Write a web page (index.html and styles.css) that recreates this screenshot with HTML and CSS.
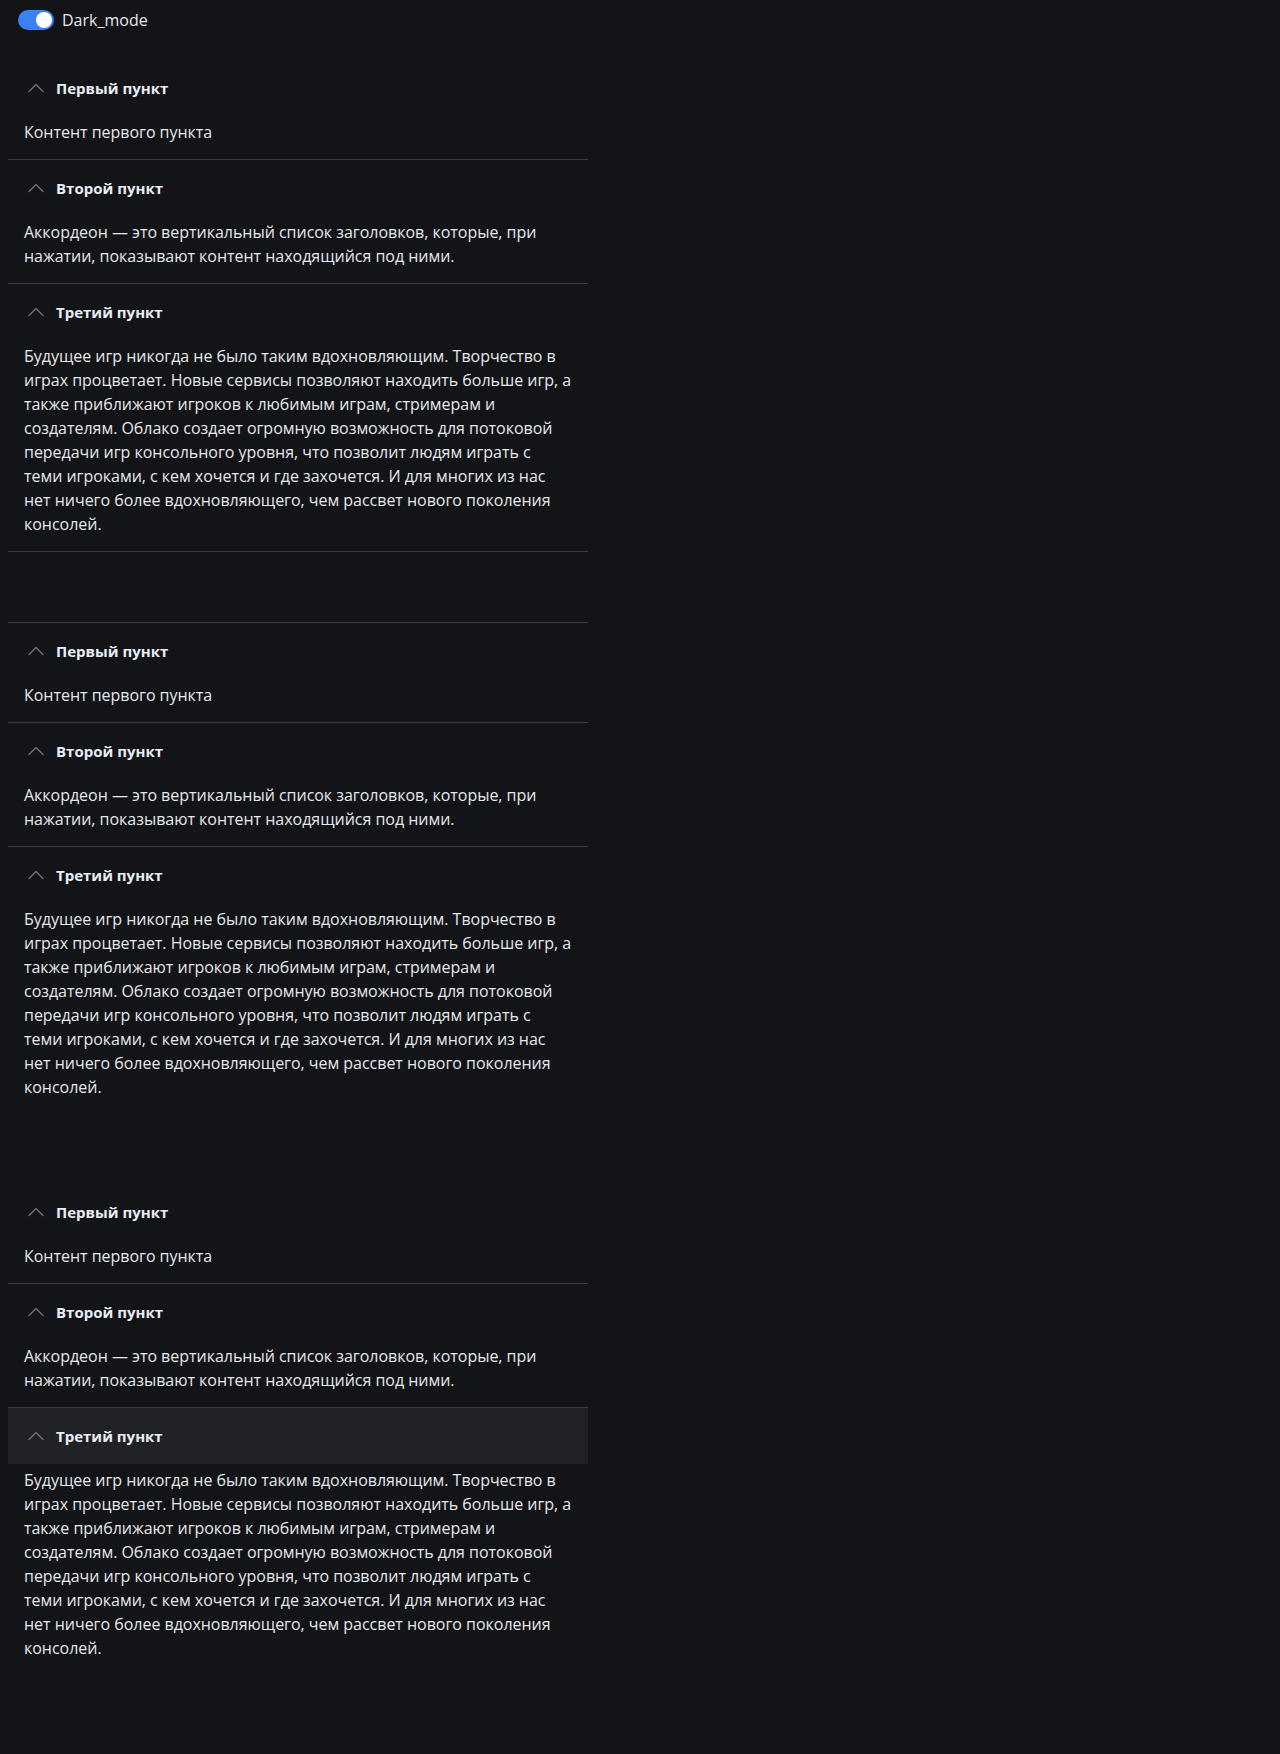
FILE: index.html
```html
<!DOCTYPE html>
<html lang="ru">
<head>
<meta charset="utf-8">
<title>Accordion</title>
<link rel="stylesheet" href="styles.css">
</head>
<body>
<label class="switch-row">
  <span class="switch"><span class="knob"></span></span>
  <span class="switch-label">Dark_mode</span>
</label>

<div class="acc acc--bottom">
  <div class="item">
    <div class="head"><svg class="chev" viewBox="0 0 24 24"><path d="M5 15.5l7-7 7 7"/></svg><span>Первый пункт</span></div>
    <div class="body">Контент первого пункта</div>
  </div>
  <div class="item">
    <div class="head"><svg class="chev" viewBox="0 0 24 24"><path d="M5 15.5l7-7 7 7"/></svg><span>Второй пункт</span></div>
    <div class="body">Аккордеон — это вертикальный список заголовков, которые, при нажатии, показывают контент находящийся под ними.</div>
  </div>
  <div class="item">
    <div class="head"><svg class="chev" viewBox="0 0 24 24"><path d="M5 15.5l7-7 7 7"/></svg><span>Третий пункт</span></div>
    <div class="body">Будущее игр никогда не было таким вдохновляющим. Творчество в играх процветает. Новые сервисы позволяют находить больше игр, а также приближают игроков к любимым играм, стримерам и создателям. Облако создает огромную возможность для потоковой передачи игр консольного уровня, что позволит людям играть с теми игроками, с кем хочется и где захочется. И для многих из нас нет ничего более вдохновляющего, чем рассвет нового поколения консолей.</div>
  </div>
</div>

<div class="acc acc--top">
  <div class="item">
    <div class="head"><svg class="chev" viewBox="0 0 24 24"><path d="M5 15.5l7-7 7 7"/></svg><span>Первый пункт</span></div>
    <div class="body">Контент первого пункта</div>
  </div>
  <div class="item">
    <div class="head"><svg class="chev" viewBox="0 0 24 24"><path d="M5 15.5l7-7 7 7"/></svg><span>Второй пункт</span></div>
    <div class="body">Аккордеон — это вертикальный список заголовков, которые, при нажатии, показывают контент находящийся под ними.</div>
  </div>
  <div class="item">
    <div class="head"><svg class="chev" viewBox="0 0 24 24"><path d="M5 15.5l7-7 7 7"/></svg><span>Третий пункт</span></div>
    <div class="body">Будущее игр никогда не было таким вдохновляющим. Творчество в играх процветает. Новые сервисы позволяют находить больше игр, а также приближают игроков к любимым играм, стримерам и создателям. Облако создает огромную возможность для потоковой передачи игр консольного уровня, что позволит людям играть с теми игроками, с кем хочется и где захочется. И для многих из нас нет ничего более вдохновляющего, чем рассвет нового поколения консолей.</div>
  </div>
</div>

<div class="acc acc--flush">
  <div class="item">
    <div class="head"><svg class="chev" viewBox="0 0 24 24"><path d="M5 15.5l7-7 7 7"/></svg><span>Первый пункт</span></div>
    <div class="body">Контент первого пункта</div>
  </div>
  <div class="item">
    <div class="head"><svg class="chev" viewBox="0 0 24 24"><path d="M5 15.5l7-7 7 7"/></svg><span>Второй пункт</span></div>
    <div class="body">Аккордеон — это вертикальный список заголовков, которые, при нажатии, показывают контент находящийся под ними.</div>
  </div>
  <div class="item">
    <div class="head head--hover"><svg class="chev" viewBox="0 0 24 24"><path d="M5 15.5l7-7 7 7"/></svg><span>Третий пункт</span></div>
    <div class="body">Будущее игр никогда не было таким вдохновляющим. Творчество в играх процветает. Новые сервисы позволяют находить больше игр, а также приближают игроков к любимым играм, стримерам и создателям. Облако создает огромную возможность для потоковой передачи игр консольного уровня, что позволит людям играть с теми игроками, с кем хочется и где захочется. И для многих из нас нет ничего более вдохновляющего, чем рассвет нового поколения консолей.</div>
  </div>
</div>
</body>
</html>
```

FILE: styles.css
```css
html {
  background: #131418;
}
body {
  margin: 8px;
  min-height: 1738px;
  font-family: "Open Sans", "Noto Sans", sans-serif;
  font-size: 16px;
  line-height: 24px;
  color: #e6e7ea;
}
.switch-row {
  display: flex;
  align-items: center;
  gap: 8px;
  height: 24px;
  padding-left: 10px;
}
.switch {
  display: flex;
  justify-content: flex-end;
  align-items: center;
  width: 36px;
  height: 20px;
  padding: 2px;
  box-sizing: border-box;
  border-radius: 10px;
  background: #3b82f6;
}
.knob {
  width: 16px;
  height: 16px;
  border-radius: 50%;
  background: #ffffff;
}
.switch-label {
  font-size: 16px;
  color: #e6e7ea;
}
.acc {
  width: 580px;
  margin-top: 70px;
}
.acc--bottom {
  margin-top: 28px;
}
.acc--bottom .item {
  border-bottom: 1px solid #3a3b40;
}
.acc--top .item {
  border-top: 1px solid #3a3b40;
}
.acc--flush .item + .item {
  border-top: 1px solid #3a3b40;
}
.head {
  display: flex;
  align-items: center;
  gap: 8px;
  height: 56px;
  padding: 0 16px;
  font-weight: 700;
  font-size: 15px;
  color: #e9eef6;
}
.head--hover {
  background: #212226;
}
.chev {
  width: 24px;
  height: 24px;
  flex: none;
  fill: none;
  stroke: #70737a;
  stroke-width: 1.4;
  stroke-linecap: round;
  stroke-linejoin: round;
}
.body {
  padding: 4px 16px 15px;
  letter-spacing: -0.025px;
  color: #e6e7ea;
}
```
